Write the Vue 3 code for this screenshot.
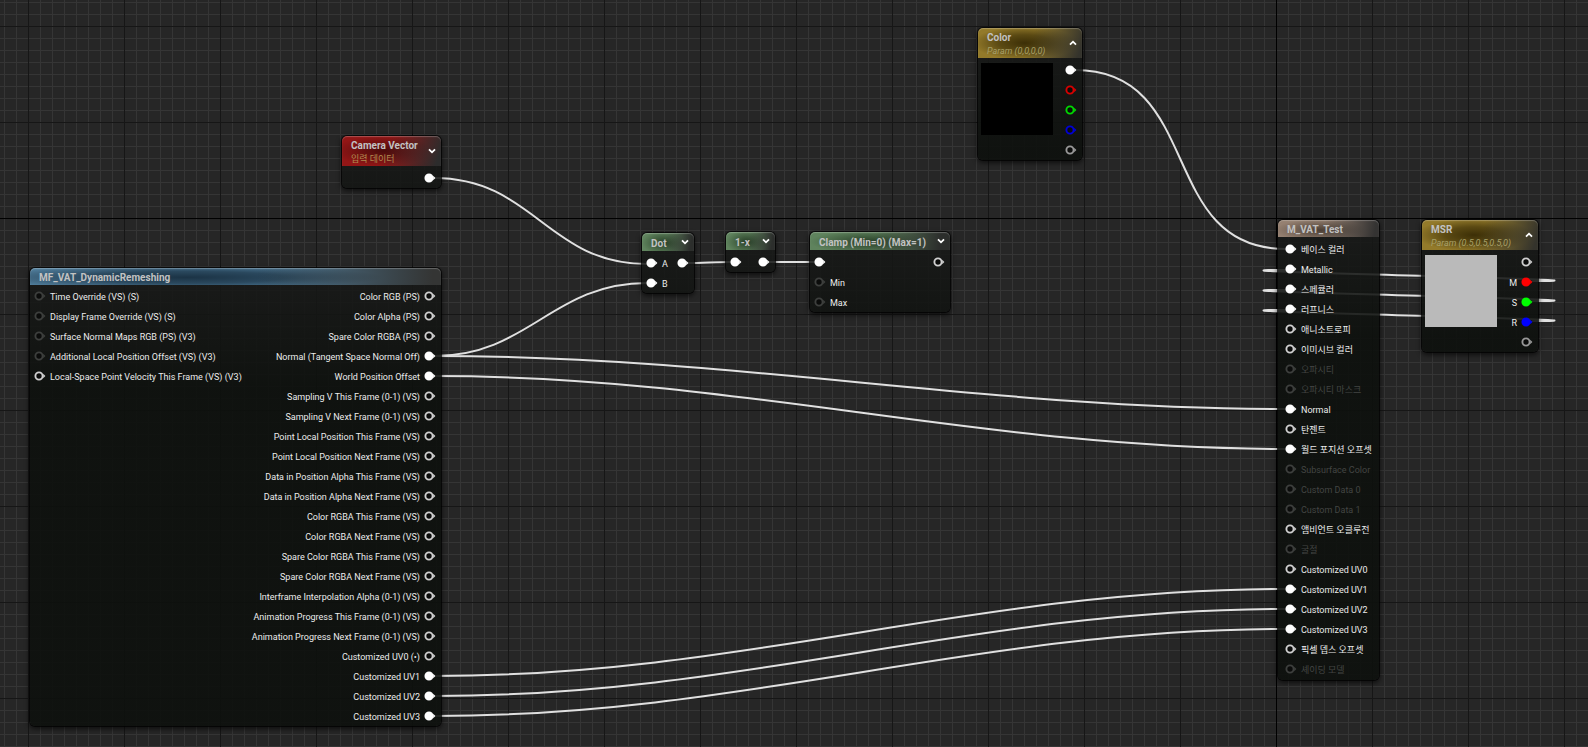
<script setup>
import { ref } from 'vue';

const on = (label = '', color = 'white') => ({ label, color, linked: true });
const off = (label = '', color = 'white') => ({ label, color });
const faded = (label = '') => ({ label, color: 'dim' });
const disabled = (label) => ({ label, color: 'dim', disabled: true });

const nodes = ref([
  {
    id: 'camera', title: 'Camera Vector', subtitle: '입력 데이터', kind: 'red',
    x: 342, y: 136, width: 99, toggle: 'down',
    inputs: [],
    outputs: [on()]
  },
  {
    id: 'remesh', title: 'MF_VAT_DynamicRemeshing', kind: 'blue',
    x: 30, y: 268, width: 411,
    inputs: [
      faded('Time Override (VS) (S)'),
      faded('Display Frame Override (VS) (S)'),
      faded('Surface Normal Maps RGB (PS) (V3)'),
      faded('Additional Local Position Offset (VS) (V3)'),
      off('Local-Space Point Velocity This Frame (VS) (V3)')
    ],
    outputs: [
      off('Color RGB (PS)'),
      off('Color Alpha (PS)'),
      off('Spare Color RGBA (PS)'),
      on('Normal (Tangent Space Normal Off)'),
      on('World Position Offset'),
      off('Sampling V This Frame (0-1) (VS)'),
      off('Sampling V Next Frame (0-1) (VS)'),
      off('Point Local Position This Frame (VS)'),
      off('Point Local Position Next Frame (VS)'),
      off('Data in Position Alpha This Frame (VS)'),
      off('Data in Position Alpha Next Frame (VS)'),
      off('Color RGBA This Frame (VS)'),
      off('Color RGBA Next Frame (VS)'),
      off('Spare Color RGBA This Frame (VS)'),
      off('Spare Color RGBA Next Frame (VS)'),
      off('Interframe Interpolation Alpha (0-1) (VS)'),
      off('Animation Progress This Frame (0-1) (VS)'),
      off('Animation Progress Next Frame (0-1) (VS)'),
      off('Customized UV0 (•)'),
      on('Customized UV1'),
      on('Customized UV2'),
      on('Customized UV3')
    ]
  },
  {
    id: 'dot', title: 'Dot', kind: 'green',
    x: 642, y: 233, width: 52, toggle: 'down',
    inputs: [on('A'), on('B')],
    outputs: [on()]
  },
  {
    id: 'oneminus', title: '1-x', kind: 'green',
    x: 726, y: 232, width: 49, toggle: 'down',
    inputs: [on()],
    outputs: [on()]
  },
  {
    id: 'clamp', title: 'Clamp (Min=0) (Max=1)', kind: 'green',
    x: 810, y: 232, width: 140, toggle: 'down',
    inputs: [on(), faded('Min'), faded('Max')],
    outputs: [off()]
  },
  {
    id: 'color', title: 'Color', subtitle: 'Param (0,0,0,0)', kind: 'gold',
    x: 978, y: 28, width: 104, toggle: 'up', swatch: '#000000',
    inputs: [],
    outputs: [on(), off('', 'red'), off('', 'green'), off('', 'blue'), off('', 'gray')]
  },
  {
    id: 'material', title: 'M_VAT_Test', kind: 'tan',
    x: 1278, y: 220, width: 101,
    inputs: [
      on('베이스 컬러'),
      on('Metallic'),
      on('스페큘러'),
      on('러프니스'),
      off('애니소트로피'),
      off('이미시브 컬러'),
      disabled('오파시티'),
      disabled('오파시티 마스크'),
      on('Normal'),
      off('탄젠트'),
      on('월드 포지션 오프셋'),
      disabled('Subsurface Color'),
      disabled('Custom Data 0'),
      disabled('Custom Data 1'),
      off('앰비언트 오클루전'),
      disabled('굴절'),
      off('Customized UV0'),
      on('Customized UV1'),
      on('Customized UV2'),
      on('Customized UV3'),
      off('픽셀 뎁스 오프셋'),
      disabled('셰이딩 모델')
    ],
    outputs: []
  },
  {
    id: 'msr', title: 'MSR', subtitle: 'Param (0.5,0.5,0.5,0)', kind: 'gold',
    x: 1422, y: 220, width: 116, toggle: 'up', swatch: '#bababa',
    inputs: [],
    outputs: [off(), on('M', 'red'), on('S', 'green'), on('R', 'blue'), off('', 'gray')]
  }
]);

// [x1, y1, x2, y2]
const wires = [
  [434, 178, 647, 264],
  [434, 356, 647, 283],
  [434, 356, 1286, 409],
  [434, 376, 1286, 449],
  [434, 676, 1286, 589],
  [434, 696, 1286, 609],
  [434, 716, 1286, 629],
  [687, 263, 731, 262],
  [769, 262, 815, 262],
  [1075, 70, 1286, 249],
  [1532, 281, 1286, 270],
  [1532, 301, 1286, 290],
  [1532, 321, 1286, 310]
];

function wirePath([x1, y1, x2, y2]) {
  const reach = x2 > x1 ? (x2 - x1 + Math.abs(y2 - y1)) / 3 : 134;
  return `M${x1} ${y1} C${x1 + reach} ${y1} ${x2 - reach} ${y2} ${x2} ${y2}`;
}

function place(node) {
  return { left: node.x + 'px', top: node.y + 'px', width: node.width + 'px' };
}

function flip(node) {
  node.toggle = node.toggle === 'up' ? 'down' : 'up';
}
</script>

<template>
  <main class="graph">
    <svg class="wires" aria-hidden="true">
      <path v-for="(wire, i) in wires" :key="i" :d="wirePath(wire)" />
    </svg>

    <section v-for="node in nodes" :key="node.id" class="node" :class="node.kind" :style="place(node)">
      <header class="head">
        <div class="titles">
          <h2 class="title">{{ node.title }}</h2>
          <p v-if="node.subtitle" class="subtitle">{{ node.subtitle }}</p>
        </div>
        <button v-if="node.toggle" class="toggle" type="button" aria-label="Toggle preview" @click="flip(node)">
          <svg width="8" height="6" viewBox="0 0 8 6">
            <path :d="node.toggle === 'up' ? 'M1 4.7 L4 1.7 L7 4.7' : 'M1 1.3 L4 4.3 L7 1.3'" />
          </svg>
        </button>
      </header>

      <div class="body">
        <div v-if="node.swatch" class="swatch" :style="{ background: node.swatch }"></div>
        <ul class="pins">
          <li v-for="(pin, i) in node.inputs" :key="i" class="row" :class="{ disabled: pin.disabled }">
            <svg class="pin" :class="[pin.color + '-pin', { linked: pin.linked }]" width="12" height="10" viewBox="0 0 12 10">
              <circle cx="5" cy="5" r="3.6" />
              <path d="M9.2 2.8 L11.4 5 L9.2 7.2 Z" />
            </svg>
            <span class="label">{{ pin.label }}</span>
          </li>
        </ul>
        <ul class="pins outputs">
          <li v-for="(pin, i) in node.outputs" :key="i" class="row">
            <span class="label">{{ pin.label }}</span>
            <svg class="pin" :class="[pin.color + '-pin', { linked: pin.linked }]" width="12" height="10" viewBox="0 0 12 10">
              <circle cx="5" cy="5" r="3.6" />
              <path d="M9.2 2.8 L11.4 5 L9.2 7.2 Z" />
            </svg>
          </li>
        </ul>
      </div>
    </section>
  </main>
</template>

<style>
body {
  margin: 0;
  background: #262626;
}
</style>

<style scoped>
.graph {
  position: relative;
  min-height: 100vh;
  overflow: hidden;
  font-family: Roboto, "Noto Sans CJK KR", sans-serif;
  font-size: 9px;
  color: #ececec;
  background-color: #262626;
  background-image:
    linear-gradient(#000 1px, transparent 1px),
    linear-gradient(90deg, #000 1px, transparent 1px),
    linear-gradient(#161616 1px, transparent 1px),
    linear-gradient(90deg, #161616 1px, transparent 1px),
    linear-gradient(#353535 1px, transparent 1px),
    linear-gradient(90deg, #353535 1px, transparent 1px);
  background-size: 100% 2000px, 2000px 100%, 96px 96px, 96px 96px, 12px 12px, 12px 12px;
  background-position: 0 218px, 1276px 0, 28px 26px, 28px 26px, 4px 2px, 4px 2px;
}

.wires {
  position: absolute;
  inset: 0;
  width: 100%;
  height: 100%;
  fill: none;
  stroke: #e0e0e0;
  stroke-width: 2;
}

.node {
  position: absolute;
  border-radius: 5px;
  background: linear-gradient(rgba(24, 25, 24, 0.86), rgba(13, 16, 13, 0.9) 120px);
  box-shadow: 0 0 0 1px rgba(0, 0, 0, 0.7), 0 2px 5px 1px rgba(0, 0, 0, 0.6);
}

.head {
  display: flex;
  align-items: center;
  justify-content: space-between;
  padding: 0 5px 0 9px;
  border-radius: 5px 5px 0 0;
  box-shadow: inset 0 1px 1px rgba(255, 255, 255, 0.25);
}

.blue .head {
  background:
    linear-gradient(90deg, transparent 55%, #343534 98%),
    radial-gradient(ellipse 48% 70% at 38% 55%, rgba(18, 38, 54, 0.85), rgba(18, 38, 54, 0.6) 50%, transparent),
    #4f7c9a;
}

.red .head {
  background:
    linear-gradient(110deg, transparent 45%, #2c2c2c 95%),
    radial-gradient(ellipse 50% 50% at 42% 50%, rgba(50, 8, 8, 0.75), transparent),
    #921616;
}

.green .head {
  background:
    linear-gradient(100deg, transparent 45%, #2c2e2c 92%),
    radial-gradient(ellipse 42% 65% at 42% 55%, rgba(25, 45, 25, 0.8), transparent),
    #5f835d;
}

.gold .head {
  background:
    linear-gradient(110deg, transparent 50%, #34332c 96%),
    radial-gradient(ellipse 50% 55% at 45% 50%, rgba(45, 34, 0, 0.85), rgba(45, 34, 0, 0.55) 50%, transparent),
    #937a2a;
}

.tan .head {
  background:
    linear-gradient(100deg, transparent 45%, #343332 95%),
    radial-gradient(ellipse 45% 65% at 42% 60%, rgba(50, 40, 32, 0.75), transparent),
    #958071;
}

.title {
  margin: 0;
  padding-top: 2px;
  font-size: 10px;
  line-height: 15px;
  font-weight: 700;
  color: #c2c2c2;
  white-space: nowrap;
}

.subtitle {
  margin: 0;
  padding-bottom: 1px;
  font-size: 9px;
  line-height: 12px;
  color: #b08d50;
  white-space: nowrap;
}

.gold .subtitle {
  font-style: italic;
  color: #a8a068;
}

.toggle {
  display: flex;
  align-items: center;
  height: 18px;
  padding: 0;
  border: 0;
  background: none;
  cursor: pointer;
}

.toggle path {
  fill: none;
  stroke: #fff;
  stroke-width: 1.8;
}

.body {
  display: flex;
  padding: 2px 5px 0 4px;
}

.blue .body {
  padding-top: 1px;
}

.tan .body {
  padding-left: 7px;
  padding-bottom: 1px;
}

.swatch {
  width: 72px;
  height: 72px;
  margin: 3px 0 0 -1px;
}

.pins {
  margin: 0;
  padding: 0;
  list-style: none;
}

.outputs {
  margin-left: auto;
}

.row {
  display: flex;
  align-items: center;
  gap: 4px;
  height: 20px;
}

.outputs .row {
  justify-content: flex-end;
}

.label {
  padding-top: 2px;
  line-height: 18px;
  white-space: nowrap;
}

.row.disabled {
  color: #434543;
}

.pin {
  flex: none;
}

.pin circle {
  fill: #0b0c0b;
  stroke: currentColor;
  stroke-width: 1.9;
}

.pin path {
  fill: currentColor;
}

.pin.linked circle {
  fill: currentColor;
}

.white-pin {
  color: #d0d0d0;
}

.white-pin.linked {
  color: #fff;
}

.dim-pin {
  color: #3d3f3d;
}

.gray-pin {
  color: #999;
}

.red-pin {
  color: #d90000;
}

.green-pin {
  color: #00d900;
}

.blue-pin {
  color: #0000d9;
}

.red-pin.linked {
  color: #f00;
}

.green-pin.linked {
  color: #0f0;
}

.blue-pin.linked {
  color: #00f;
}
</style>
